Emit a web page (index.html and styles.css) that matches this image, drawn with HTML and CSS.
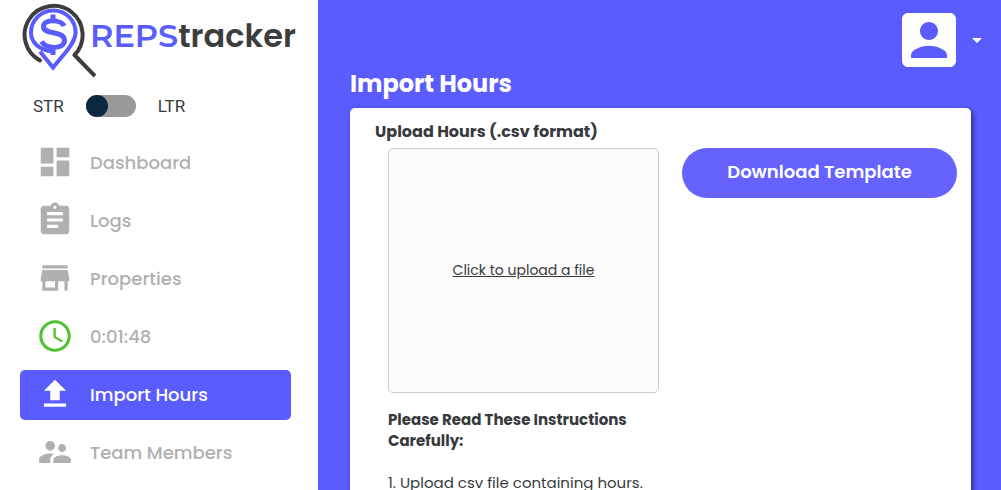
FILE: index.html
```html
<!DOCTYPE html>
<html lang="en">
<head>
<meta charset="utf-8">
<meta name="viewport" content="width=device-width, initial-scale=1">
<title>REPStracker – Import Hours</title>
<link rel="stylesheet" href="styles.css">
</head>
<body>
<div class="app">
  <aside class="sidebar">
    <a class="logo" href="#">
      <svg class="logo-mark" viewBox="0 0 74 78" fill="none" aria-hidden="true">
        <path d="M18 60.500A29 29 0 1 1 52.500 55L73 76" stroke="#3d3d3d" stroke-width="4" stroke-linejoin="round"/>
        <circle cx="18" cy="60.500" r="2" fill="#3d3d3d"/>
        <path d="M31 51.500C17 50 9 42.500 9 32.500A22.300 22 0 0 1 53.600 32.500C53.600 39 49.500 44.500 45.500 50L31 67.500L18 51.500" stroke="#5a5cfd" stroke-width="4"/>
        <path d="M42 26C39.500 19.500 21.500 18.500 21.500 26.500C21.500 35.500 42.500 30 42.500 40.500C42.500 49.500 24 49.500 19.500 41.500" stroke="#5a5cfd" stroke-width="5"/>
        <path d="M31 14.500V20M31 46V55" stroke="#5a5cfd" stroke-width="5"/>
      </svg>
      <span class="wordmark"><span class="wordmark-accent">REPS</span>tracker</span>
    </a>
    <div class="mode">
      <span>STR</span>
      <input class="switch" type="checkbox" role="switch" aria-label="Use LTR instead of STR">
      <span>LTR</span>
    </div>
    <nav class="nav">
      <a class="nav-item" href="#">
        <svg class="icon" viewBox="0 0 24 24" aria-hidden="true"><path d="M3 13h8V3H3v10zm0 8h8v-6H3v6zm10 0h8V11h-8v10zm0-18v6h8V3h-8z"/></svg>
        <span>Dashboard</span>
      </a>
      <a class="nav-item" href="#">
        <svg class="icon" viewBox="0 0 24 24" aria-hidden="true"><path d="M19 3h-4.180C14.400 1.840 13.300 1 12 1c-1.300 0-2.400.84-2.820 2H5c-1.100 0-2 .9-2 2v14c0 1.100.9 2 2 2h14c1.100 0 2-.9 2-2V5c0-1.100-.9-2-2-2zm-7 0c.55 0 1 .45 1 1s-.45 1-1 1-1-.45-1-1 .45-1 1-1zm2 14H7v-2h7v2zm3-4H7v-2h10v2zm0-4H7V7h10v2z"/></svg>
        <span>Logs</span>
      </a>
      <a class="nav-item" href="#">
        <svg class="icon" viewBox="0 0 24 24" aria-hidden="true"><path d="M20 4H4v2h16V4zm1 10v-2l-1-5H4l-1 5v2h1v6h10v-6h4v6h2v-6h1zm-9 4H6v-4h6v4z"/></svg>
        <span>Properties</span>
      </a>
      <a class="nav-item" href="#">
        <svg class="icon icon-timer" viewBox="0 0 24 24" aria-hidden="true"><path d="M11.990 2C6.470 2 2 6.480 2 12s4.470 10 9.990 10C17.520 22 22 17.520 22 12S17.520 2 11.990 2zM12 20c-4.420 0-8-3.580-8-8s3.580-8 8-8 8 3.580 8 8-3.580 8-8 8zm.5-13H11v6l5.250 3.150.75-1.230-4.500-2.670z"/></svg>
        <span>0:01:48</span>
      </a>
      <a class="nav-item nav-item-active" href="#" aria-current="page">
        <svg class="icon" viewBox="0 0 24 24" aria-hidden="true"><path d="M9 16h6v-6h4l-7-7-7 7h4v6zm-4 2h14v2H5v-2z"/></svg>
        <span>Import Hours</span>
      </a>
      <a class="nav-item" href="#">
        <svg class="icon" viewBox="0 0 24 24" aria-hidden="true"><path d="M16.500 12c1.380 0 2.490-1.120 2.490-2.500S17.880 7 16.500 7C15.120 7 14 8.120 14 9.500s1.120 2.500 2.500 2.500zM9 11c1.660 0 2.990-1.340 2.990-3S10.660 5 9 5C7.340 5 6 6.340 6 8s1.340 3 3 3zm7.500 3c-1.830 0-5.500.92-5.500 2.750V19h11v-2.250c0-1.830-3.670-2.750-5.500-2.750zM9 13c-2.330 0-7 1.170-7 3.500V19h7v-2.250c0-.85.33-2.340 2.370-3.470C10.500 13.100 9.660 13 9 13z"/></svg>
        <span>Team Members</span>
      </a>
    </nav>
  </aside>
  <main class="main">
    <header class="topbar">
      <button class="account" type="button" aria-label="Account menu">
        <svg class="avatar" viewBox="3 3 18 18" aria-hidden="true"><path d="M3 5v14c0 1.100.89 2 2 2h14c1.100 0 2-.9 2-2V5c0-1.100-.9-2-2-2H5c-1.110 0-2 .9-2 2zm12 4c0 1.660-1.340 3-3 3s-3-1.340-3-3 1.340-3 3-3 3 1.340 3 3zm-9 8c0-2 4-3.100 6-3.100s6 1.100 6 3.100v1H6v-1z"/></svg>
        <svg class="caret" viewBox="0 0 10 5" aria-hidden="true"><path d="M0 0h10L5 5z"/></svg>
      </button>
    </header>
    <h1 class="title">Import Hours</h1>
    <section class="card">
      <h2 class="card-title">Upload Hours (.csv format)</h2>
      <div class="columns">
        <div class="upload">
          <button class="dropzone" type="button">Click to upload a file</button>
          <h3 class="instructions-title">Please Read These Instructions Carefully:</h3>
          <p class="instruction">1. Upload csv file containing hours.</p>
        </div>
        <button class="download" type="button">Download Template</button>
      </div>
    </section>
  </main>
</div>
</body>
</html>
```
FILE: styles.css
```css
* {
  box-sizing: border-box;
}

body {
  margin: 0;
  overflow: hidden;
  background: #5a5cfd;
  color: #373a3c;
  font-family: Poppins, Inter, "Open Sans", sans-serif;
}

button {
  border: 0;
  padding: 0;
  font-family: inherit;
  cursor: pointer;
}

h1,
h2,
h3,
p {
  margin: 0;
}

.app {
  display: grid;
  grid-template-columns: 318px minmax(0, 1fr);
  height: 100vh;
}

.sidebar {
  background: #fff;
  overflow: hidden;
}

.logo {
  display: flex;
  align-items: flex-start;
  height: 78px;
  padding-left: 22px;
  text-decoration: none;
}

.logo-mark {
  flex: none;
  width: 74px;
  height: 78px;
}

.wordmark {
  margin-left: -6px;
  padding-top: 16px;
  color: #3d3d3d;
  font-family: Poppins, Inter, sans-serif;
  font-size: 32px;
  font-weight: 600;
  line-height: 40px;
}

.wordmark-accent {
  color: #5a5cfd;
  font-family: Montserrat, Inter, sans-serif;
}

.mode {
  display: flex;
  align-items: center;
  gap: 22px;
  height: 56px;
  padding-left: 33px;
  font-family: Roboto, sans-serif;
  font-size: 17px;
}

.switch {
  appearance: none;
  width: 50px;
  height: 22px;
  margin: 0;
  border-radius: 11px;
  background: #999;
  cursor: pointer;
}

.switch::before {
  content: "";
  display: block;
  width: 22px;
  height: 22px;
  border-radius: 11px;
  background: #0b2840;
}

.switch:checked::before {
  margin-left: auto;
}

.nav {
  display: flex;
  flex-direction: column;
  gap: 8px;
  padding: 4px 27px 0 20px;
}

.nav-item {
  display: flex;
  align-items: center;
  gap: 16px;
  height: 50px;
  padding: 0 0 2px 16px;
  border-radius: 5px;
  color: #b0b0b0;
  font-size: 18px;
  font-weight: 500;
  text-decoration: none;
}

.nav-item-active {
  background: #5a5cfd;
  color: #fff;
}

.icon {
  flex: none;
  width: 38px;
  height: 38px;
  fill: currentColor;
}

.icon-timer {
  fill: #52c234;
}

.main {
  padding: 13px 30px 0 32px;
}

.topbar {
  display: flex;
  justify-content: flex-end;
  margin-right: -11px;
}

.account {
  display: flex;
  align-items: center;
  gap: 16px;
  height: 54px;
  background: none;
}

.avatar {
  width: 54px;
  height: 54px;
  fill: #fff;
}

.caret {
  width: 10px;
  height: 5px;
  fill: #fff;
}

.title {
  color: #fff;
  font-size: 24px;
  font-weight: 700;
  line-height: 34px;
}

.card {
  min-height: 100vh;
  margin-top: 7px;
  padding: 12px 14px 24px 25px;
  border-radius: 5px;
  background: #fff;
  box-shadow: 2px 2px 5px rgba(0, 0, 0, 0.5);
}

.card-title {
  font-size: 16px;
  font-weight: 700;
  line-height: 24px;
}

.columns {
  display: grid;
  grid-template-columns: 271fr 275fr;
  align-items: start;
  gap: 23px;
  margin-top: 4px;
  padding-left: 13px;
}

.dropzone {
  width: 100%;
  height: 245px;
  border: 1px solid #ccc;
  border-radius: 5px;
  background: #fcfcfc;
  color: #373a3c;
  font-size: 14px;
  text-decoration: underline;
}

.instructions-title {
  margin-top: 16px;
  font-size: 15px;
  font-weight: 700;
  line-height: 21px;
}

.instruction {
  margin-top: 21px;
  font-size: 15px;
  line-height: 21px;
}

.download {
  height: 50px;
  padding-bottom: 3px;
  border-radius: 25px;
  background: #6562fd;
  color: #fff;
  font-size: 18px;
  font-weight: 600;
}
```
